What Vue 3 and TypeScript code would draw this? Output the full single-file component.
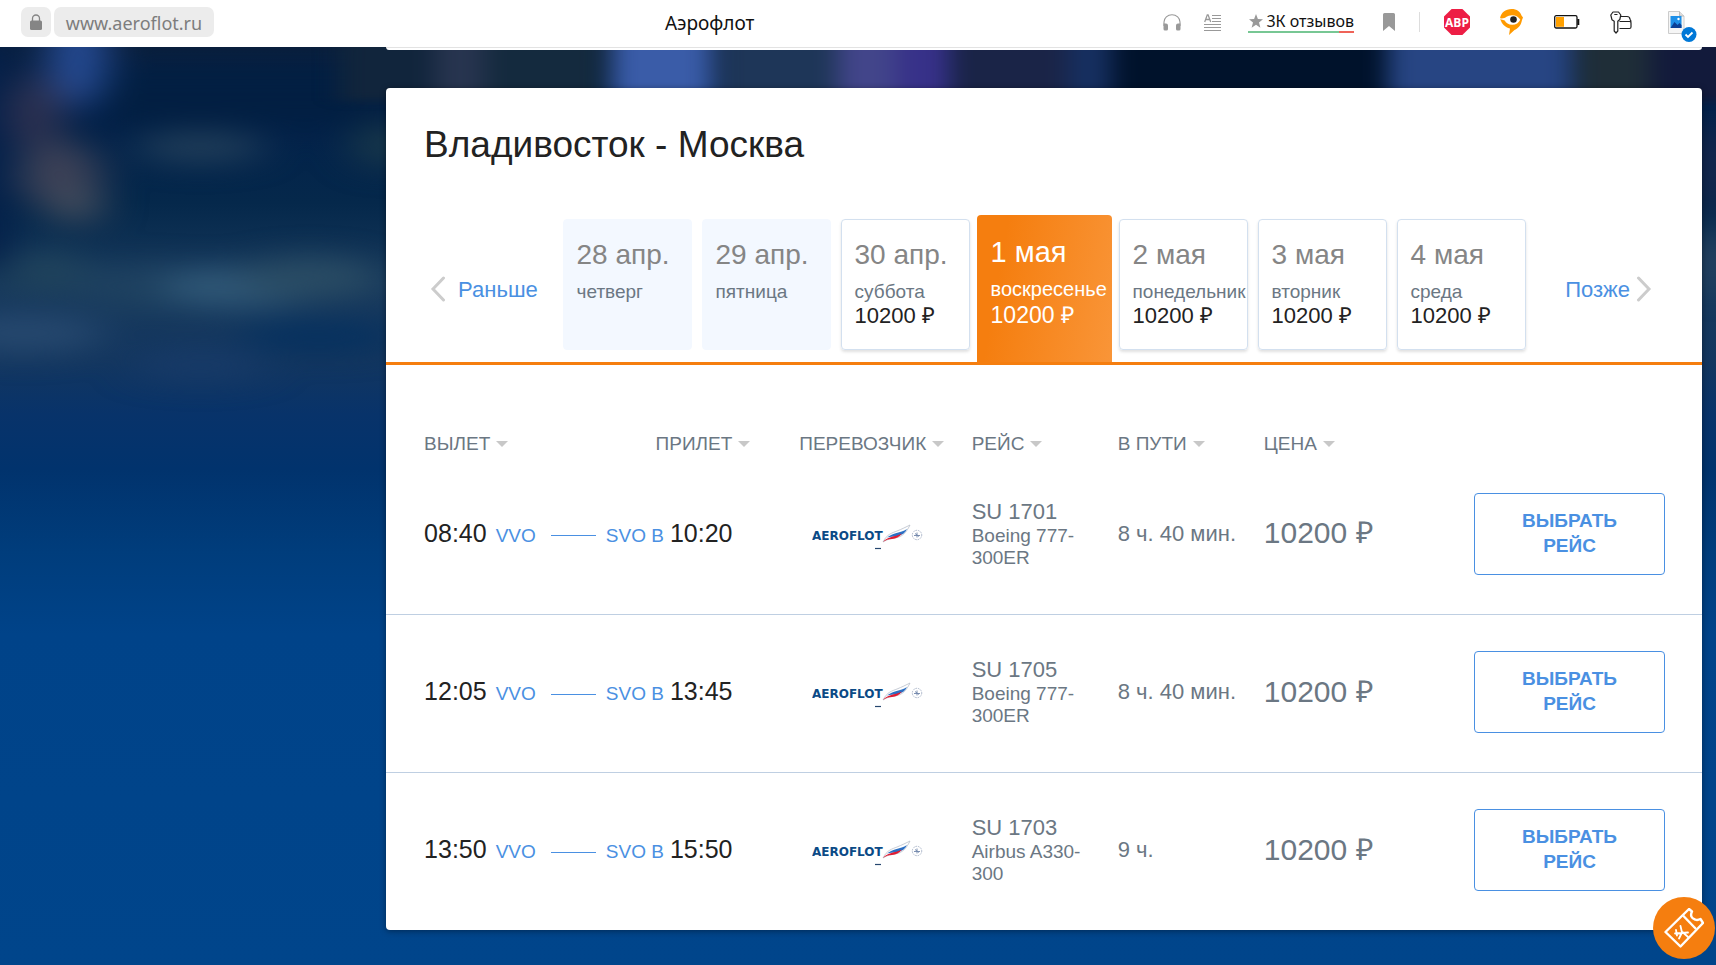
<script setup lang="ts">
import { ref } from 'vue'

interface Day {
  date: string
  weekday: string
  price?: string
}

interface Flight {
  departure: string
  from: string
  to: string
  arrival: string
  number: string
  aircraft: string
  duration: string
  price: string
}

const days: Day[] = [
  { date: '28 апр.', weekday: 'четверг' },
  { date: '29 апр.', weekday: 'пятница' },
  { date: '30 апр.', weekday: 'суббота', price: '10200' },
  { date: '1 мая', weekday: 'воскресенье', price: '10200' },
  { date: '2 мая', weekday: 'понедельник', price: '10200' },
  { date: '3 мая', weekday: 'вторник', price: '10200' },
  { date: '4 мая', weekday: 'среда', price: '10200' },
]
const selectedDay = ref(3)

const columns = [
  { key: 'departure', title: 'Вылет' },
  { key: 'arrival', title: 'Прилет' },
  { key: 'carrier', title: 'Перевозчик' },
  { key: 'flight', title: 'Рейс' },
  { key: 'duration', title: 'В пути' },
  { key: 'price', title: 'Цена' },
]

const flights: Flight[] = [
  { departure: '08:40', from: 'VVO', to: 'SVO B', arrival: '10:20', number: 'SU 1701', aircraft: 'Boeing 777-300ER', duration: '8 ч. 40 мин.', price: '10200' },
  { departure: '12:05', from: 'VVO', to: 'SVO B', arrival: '13:45', number: 'SU 1705', aircraft: 'Boeing 777-300ER', duration: '8 ч. 40 мин.', price: '10200' },
  { departure: '13:50', from: 'VVO', to: 'SVO B', arrival: '15:50', number: 'SU 1703', aircraft: 'Airbus A330-300', duration: '9 ч.', price: '10200' },
]
</script>

<template>
  <div class="window">
    <header class="toolbar">
      <div class="address">
        <button class="chip lock" type="button" aria-label="Защищённое соединение">
          <svg width="12" height="16" viewBox="0 0 12 16">
            <path d="M2.5 7V4.5a3.5 3.5 0 0 1 7 0V7" fill="none" stroke="#858585" stroke-width="1.3" />
            <rect y="6.500" width="12" height="9.500" rx="1.500" fill="#858585" />
          </svg>
        </button>
        <a class="chip url" href="#">www.aeroflot.ru</a>
      </div>
      <div class="page-title">Аэрофлот</div>
      <div class="tools">
        <button type="button" aria-label="Аудио" class="tool headphones">
          <svg width="18" height="17" viewBox="0 0 18 17">
            <path d="M1 12V8a8 7.300 0 0 1 16 0v4" fill="none" stroke="#999" stroke-width="1.100" />
            <path d="M0.500 9.500H3a2 2 0 0 1 2 2V15a1.500 1.500 0 0 1-1.500 1.500H2A1.500 1.500 0 0 1 .5 15zM17.500 9.500H15a2 2 0 0 0-2 2V15a1.500 1.500 0 0 0 1.500 1.500H16a1.500 1.500 0 0 0 1.500-1.500z" fill="#999" />
          </svg>
        </button>
        <button type="button" aria-label="Режим чтения" class="tool reader">
          <svg width="17" height="17" viewBox="0 0 17 17">
            <path d="M.7 8 3.300.8h.8L6.700 8M1.700 5.500h4" fill="none" stroke="#999" stroke-width="1.300" />
            <path d="M8 1.500h9M8 4.500h9M8 7.500h9M0 10.500h17M0 13.500h17M0 16.500h17" stroke="#999" />
          </svg>
        </button>
        <a class="reviews" href="#">
          <svg width="14" height="14" viewBox="0 0 14 14">
            <path d="m7 0 1.900 4.900 5.100.3-4 3.300 1.400 5.200L7 10.800l-4.400 2.900L4 8.500 0 5.200l5.100-.3z" fill="#999" />
          </svg>
          <span>3К отзывов</span>
        </a>
        <button type="button" aria-label="Закладка" class="tool bookmark">
          <svg width="12" height="18" viewBox="0 0 12 18">
            <path d="M1.500 0h9A1.500 1.500 0 0 1 12 1.500V18l-6-5-6 5V1.500A1.500 1.500 0 0 1 1.500 0z" fill="#999" />
          </svg>
        </button>
        <span class="separator"></span>
        <button type="button" aria-label="Блокировщик рекламы" class="tool blocker">
          <svg width="26" height="26" viewBox="0 0 26 26">
            <path d="M7.600 0h10.800L26 7.600v10.800L18.400 26H7.600L0 18.400V7.600z" fill="#ed1e45" />
            <text x="13" y="17.500" text-anchor="middle" font-family="Open Sans, sans-serif" font-weight="700" font-size="12" fill="#fff">ABP</text>
          </svg>
        </button>
        <button type="button" aria-label="Советник" class="tool eye">
          <svg width="23" height="26" viewBox="0 0 23 26">
            <path d="M0 9.500C1 3.500 5.500 0 11.500 0 17 0 20 2.500 21.500 6.500L23 8.500l-1 2.500C21 17 17.500 19.500 14.500 21L9 26l1-6.500C5 18 2 15.500 0 9.500z" fill="#ff9a00" />
            <path d="M0 9.300c6 .7 6.500-2.800 12-3 4.200 0 6.800 2 8.300 4.400-1.500 3-4.300 5-8 5-3.800 0-6.300-1.900-7.600-4.300C3 11.100 1.500 10.700 0 10.300z" fill="#fff" />
            <circle cx="13.500" cy="10.500" r="3.300" fill="#222" />
          </svg>
        </button>
        <button type="button" aria-label="Батарея" class="tool battery">
          <svg width="26" height="14" viewBox="0 0 26 14">
            <rect x=".7" y=".7" width="22.300" height="12.300" rx="1.500" fill="#fff" stroke="#111" stroke-width="1.300" />
            <rect x="2" y="2" width="8" height="9.800" fill="#ffa000" />
            <path d="M24.300 4v6" stroke="#111" stroke-width="2" />
          </svg>
        </button>
        <button type="button" aria-label="Пароли" class="tool keys">
          <svg width="22" height="23" viewBox="0 0 22 23" fill="none" stroke="#222" stroke-width="1.200" stroke-linejoin="round">
            <path d="M3 1h5.500l2.300 3-1 4.500-2 1.800V20L6 22l-1.800-2V10.300L2 8.800.8 4zM4.300 3.500h3.200" />
            <path d="M10.500 5.500h6.500a3 3 0 0 1 3 3M9.500 10.500h10a1.500 1.500 0 0 1 1.500 1.500v4a1.500 1.500 0 0 1-1.500 1.500H9.500M20 8.500q1 .8 1 3" />
          </svg>
        </button>
        <button type="button" aria-label="Скриншот" class="tool image">
          <svg width="30" height="32" viewBox="0 0 30 32">
            <path d="M.5.500h11L16 5v17.500H.5z" fill="#f5f5f5" stroke="#ccc" />
            <path d="M11.500.500V5H16" fill="#ddd" stroke="#bbb" />
            <rect x="2.500" y="5" width="11" height="12" fill="#1d8fe8" />
            <path d="m2.500 17 4-6 3 3 2-2 2 2v3z" fill="#0a3f96" />
            <circle cx="10.500" cy="8" r="1.200" fill="#fff" />
            <circle cx="21" cy="23.500" r="7.500" fill="#0078d7" />
            <path d="m17.500 23.500 2.500 2.500 4.500-4.500" fill="none" stroke="#fff" stroke-width="1.800" />
          </svg>
        </button>
      </div>
    </header>

    <div class="page">
      <svg class="backdrop" viewBox="0 0 1716 918" preserveAspectRatio="none" aria-hidden="true">
        <defs>
          <linearGradient id="night" x1="0" y1="0" x2="0" y2="1">
            <stop offset="0" stop-color="#0a1f3c" />
            <stop offset=".06" stop-color="#02204a" />
            <stop offset=".17" stop-color="#05284b" />
            <stop offset=".26" stop-color="#17395c" />
            <stop offset=".34" stop-color="#13365f" />
            <stop offset=".4" stop-color="#08336a" />
            <stop offset=".46" stop-color="#01336d" />
            <stop offset=".55" stop-color="#003d7c" />
            <stop offset=".64" stop-color="#004389" />
            <stop offset="1" stop-color="#00458b" />
          </linearGradient>
          <filter id="soft" x="-20%" y="-40%" width="140%" height="180%" color-interpolation-filters="sRGB">
            <feGaussianBlur stdDeviation="20 14" />
          </filter>
          <filter id="narrow" x="-10%" y="-60%" width="120%" height="220%" color-interpolation-filters="sRGB">
            <feGaussianBlur stdDeviation="12 4" />
          </filter>
        </defs>
        <rect width="1716" height="918" fill="url(#night)" />
        <g filter="url(#soft)">
          <rect x="-40" y="-10" width="50" height="230" fill="#04204a" />
          <rect x="100" y="20" width="300" height="60" fill="#021f42" />
          <ellipse cx="78" cy="8" rx="30" ry="52" fill="#254a92" />
          <ellipse cx="36" cy="66" rx="28" ry="40" fill="#2d3150" />
          <ellipse cx="60" cy="128" rx="42" ry="34" fill="#3b4056" />
          <ellipse cx="76" cy="158" rx="28" ry="18" fill="#424c5c" />
          <ellipse cx="46" cy="225" rx="46" ry="20" fill="#20435c" />
          <ellipse cx="24" cy="286" rx="82" ry="20" fill="#26486e" />
          <ellipse cx="200" cy="100" rx="66" ry="15" fill="#223f5a" />
          <ellipse cx="385" cy="98" rx="36" ry="22" fill="#18374a" />
          <ellipse cx="150" cy="240" rx="80" ry="22" fill="#1e4160" />
          <ellipse cx="240" cy="240" rx="80" ry="20" fill="#305877" />
          <ellipse cx="310" cy="230" rx="72" ry="20" fill="#2a4c64" />
          <ellipse cx="320" cy="290" rx="80" ry="14" fill="#04305f" />
          <ellipse cx="200" cy="318" rx="70" ry="14" fill="#183b69" />
          <ellipse cx="1712" cy="213" rx="18" ry="32" fill="#2b4663" />
          <ellipse cx="1712" cy="120" rx="20" ry="46" fill="#19264c" />
        </g>
        <g filter="url(#narrow)">
          <rect x="340" y="-30" width="95" height="84" fill="#11253c" />
          <rect x="435" y="-30" width="50" height="84" fill="#27344f" />
          <rect x="485" y="-30" width="120" height="84" fill="#142a3e" />
          <rect x="612" y="-30" width="100" height="84" fill="#3a5ca8" />
          <rect x="718" y="-30" width="120" height="84" fill="#1e3658" />
          <rect x="838" y="-30" width="66" height="84" fill="#42458a" />
          <rect x="896" y="-30" width="54" height="84" fill="#373189" />
          <rect x="952" y="-30" width="120" height="84" fill="#1a2447" />
          <rect x="1068" y="-30" width="44" height="84" fill="#162f60" />
          <rect x="1112" y="-30" width="274" height="84" fill="#00122b" />
          <rect x="1388" y="-30" width="184" height="84" fill="#274583" />
          <rect x="1576" y="-30" width="74" height="84" fill="#1f2e38" />
          <rect x="1650" y="-30" width="90" height="84" fill="#121a3b" />
        </g>
      </svg>

      <main class="results">
        <div class="previous-card"></div>
        <section class="card">
          <h1>Владивосток - Москва</h1>

          <div class="days">
            <button class="shift earlier" type="button">
              <svg width="16" height="26" viewBox="0 0 16 26"><path d="M13.500 2 3 13l10.500 11" fill="none" stroke="#ccc" stroke-width="3" stroke-linecap="round" /></svg>
              <span>Раньше</span>
            </button>
            <button
              v-for="(day, index) in days"
              :key="day.date"
              type="button"
              class="day"
              :class="{ empty: !day.price, active: index === selectedDay }"
              :disabled="!day.price"
              @click="selectedDay = index"
            >
              <span class="date">{{ day.date }}</span>
              <span class="weekday">{{ day.weekday }}</span>
              <span v-if="day.price" class="fare">{{ day.price }} ₽</span>
            </button>
            <button class="shift later" type="button">
              <span>Позже</span>
              <svg width="16" height="26" viewBox="0 0 16 26"><path d="M2.500 2 13 13 2.500 24" fill="none" stroke="#ccc" stroke-width="3" stroke-linecap="round" /></svg>
            </button>
          </div>

          <table>
            <thead>
              <tr>
                <th v-for="column in columns" :key="column.key" :class="column.key" scope="col">
                  <button type="button" class="sort">{{ column.title }}</button>
                </th>
                <td class="action"></td>
              </tr>
            </thead>
            <tbody>
              <tr v-for="flight in flights" :key="flight.number">
                <td class="departure">
                  <div class="leg">
                    <span class="time">{{ flight.departure }}</span>
                    <a class="airport" href="#">{{ flight.from }}</a>
                    <span class="path"></span>
                  </div>
                </td>
                <td class="arrival">
                  <div class="leg">
                    <a class="airport" href="#">{{ flight.to }}</a>
                    <span class="time">{{ flight.arrival }}</span>
                  </div>
                </td>
                <td class="carrier">
                  <svg class="logo" width="112" height="30" viewBox="0 0 112 30" role="img" aria-label="Aeroflot">
                    <text x="0" y="20" font-family="DejaVu Sans, sans-serif" font-weight="700" font-size="12" fill="#0b4a86">AEROFLOT</text>
                    <path d="M71 22c4-8 9-9 14-11 5-2 9-4 13-6-3 6-6 10-11 12-6 2-10 1-16 5z" fill="#fff" stroke="#b9bfca" stroke-width=".8" />
                    <path d="M75 17.500c6-5 13-4 20-8.500-2 4-5 6-9 7-5 1-8 .5-11 1.500z" fill="#2a6fc4" />
                    <path d="M71 22c5-6 11-4.500 19-8.500-3 4-6 5-10 5.500-4 .3-6 1-9 3z" fill="#e01b32" />
                    <circle cx="105" cy="15" r="4.700" fill="none" stroke="#a9b4c8" stroke-dasharray="1.500 1" />
                    <path d="M102 15.500h6M105 12.500v5M103 13.500l4 3" stroke="#7086aa" stroke-width=".9" />
                    <path d="M63 28.500h6" stroke="#26466e" stroke-width="1.200" />
                  </svg>
                </td>
                <td class="flight">
                  <div class="number">{{ flight.number }}</div>
                  <div class="aircraft">{{ flight.aircraft }}</div>
                </td>
                <td class="duration">{{ flight.duration }}</td>
                <td class="price">{{ flight.price }} ₽</td>
                <td class="action"><button type="button" class="choose">Выбрать рейс</button></td>
              </tr>
            </tbody>
          </table>
        </section>
      </main>
    </div>

    <button class="ticket" type="button" aria-label="Мои билеты">
      <svg width="40" height="40" viewBox="0 0 40 40" fill="none" stroke="#fff" stroke-width="2.400" stroke-linejoin="round">
        <path d="M1.500 24 25 1l3 2.500c-2 4-.5 7 3 8 2 .8 4 .3 5.500-.5L39 15 16.500 38.500z" />
        <path d="M19 7.500 32 21" />
        <path d="M11 25.500l13-1M16.500 18l1.500 6.500-3 6M19 24.500l5 4.500M12 22l1 5.500" stroke-width="1.800" stroke-linecap="round" />
      </svg>
    </button>
  </div>
</template>

<style>
html,
body {
  margin: 0;
  background: #00458b;
}
</style>

<style scoped>
.window {
  display: flex;
  flex-direction: column;
  min-height: 100vh;
  font-family: "Liberation Sans", Arial, sans-serif;
  color: #222;
}

button {
  padding: 0;
  border: 0;
  background: none;
  font: inherit;
  color: inherit;
  cursor: pointer;
}

a {
  color: inherit;
  text-decoration: none;
}

svg {
  display: block;
  flex: none;
}

.toolbar {
  display: flex;
  align-items: center;
  height: 47px;
  box-sizing: border-box;
  padding: 0 18px 3px 21px;
  background: #fff;
  font-family: "Noto Sans", sans-serif;
}

.address {
  display: flex;
  gap: 3px;
}

.chip {
  display: flex;
  align-items: center;
  justify-content: center;
  height: 30px;
  border-radius: 7px;
  background: #ececec;
}

.lock {
  width: 30px;
}

.url {
  width: 160px;
  box-sizing: border-box;
  padding-top: 2px;
  font-size: 18px;
  color: #7d7d7d;
}

.page-title {
  flex: 1;
  padding: 2px 0 0 42px;
  text-align: center;
  font-size: 19px;
  color: #111;
}

.tools {
  display: flex;
  align-items: center;
}

.headphones { margin-right: 23px; }
.reader { margin-right: 27px; }
.blocker { margin-right: 30px; }
.eye { margin-right: 31px; }
.battery { margin-right: 30px; }
.keys { margin-right: 36px; }
.image { height: 22px; }

.reviews {
  display: flex;
  align-items: center;
  gap: 3px;
  height: 20px;
  padding-left: 1px;
  margin-right: 29px;
  border-bottom: 2px solid;
  border-image: linear-gradient(90deg, #77c794 85%, #ef6358 85%) 1;
  font-size: 16px;
  line-height: 20px;
  color: #111;
}

.separator {
  width: 1px;
  height: 20px;
  margin: 0 24px;
  background: #ddd;
}

.page {
  position: relative;
  flex: 1;
  padding: 0 14px 35px 22.5%;
  background: #00458b;
}

.backdrop {
  position: absolute;
  inset: 0;
  width: 100%;
  height: 100%;
}

.results {
  position: relative;
}

.previous-card {
  height: 3px;
  box-sizing: border-box;
  margin-bottom: 38px;
  border-top: 1px solid #e3e3e3;
  border-radius: 0 0 4px 4px;
  background: #fff;
}

.card {
  border-radius: 4px;
  background: #fff;
  box-shadow: 0 1px 6px rgba(0, 0, 0, 0.4);
}

h1 {
  margin: 0;
  padding: 35px 38px 48px;
  font-size: 37px;
  line-height: 44px;
  font-weight: 400;
  color: #222;
}

.days {
  display: flex;
  align-items: flex-start;
  gap: 10px;
  border-bottom: 3px solid #f57e0f;
}

.shift {
  display: flex;
  flex: 1 1 140px;
  align-items: center;
  gap: 12px;
  height: 26px;
  margin-top: 61px;
  font-size: 22px;
  line-height: 26px;
  color: #4a90e2;
}

.shift span {
  padding-top: 2px;
}

.earlier {
  padding-left: 44px;
}

.later {
  justify-content: flex-end;
  gap: 6px;
  padding-right: 50px;
}

.day {
  display: flex;
  flex: 0 0 129px;
  flex-direction: column;
  box-sizing: border-box;
  height: 131px;
  margin-top: 4px;
  padding: 19px 0 0 13px;
  border: 1px solid #d3e0ef;
  border-radius: 4px;
  box-shadow: 0 2px 3px rgba(0, 0, 0, 0.12);
  text-align: left;
  white-space: nowrap;
}

.date {
  font-size: 28px;
  line-height: 32px;
  color: #858585;
}

.weekday {
  margin-top: 9px;
  font-size: 19px;
  line-height: 24px;
  color: #6b7783;
}

.fare {
  font-size: 22px;
  line-height: 24px;
  color: #222;
}

.empty {
  border-color: #f3f8ff;
  background: #f3f8ff;
  box-shadow: none;
}

.active {
  flex-basis: 135px;
  height: 147px;
  margin: 0 -3px;
  border: 0;
  border-radius: 4px 4px 0 0;
  padding: 21px 0 0 14px;
  background: linear-gradient(100deg, #f57e0f 20%, #f99538);
  box-shadow: none;
}

.active span {
  color: #fff;
}

.active .date {
  font-size: 29px;
}

.active .weekday {
  font-size: 20px;
}

.active .fare {
  font-size: 23px;
  line-height: 28px;
}

table {
  width: 100%;
  table-layout: fixed;
  border-collapse: collapse;
  color: #6b7783;
}

th,
td {
  box-sizing: border-box;
  padding: 0;
  text-align: left;
  font-weight: 400;
}

thead th {
  height: 91px;
  padding-top: 66px;
}

th.departure { width: 16.7%; }
th.arrival { width: 14.7%; padding-right: 49px; text-align: right; }
th.carrier { width: 13.1%; }
th.flight,
th.duration,
th.price { width: 11.1%; }

.sort {
  display: inline-flex;
  align-items: center;
  gap: 6px;
  font-size: 19px;
  line-height: 22px;
  text-transform: uppercase;
  white-space: nowrap;
}

.sort::after {
  content: "";
  border: 6px solid transparent;
  border-top-color: #c8c8c8;
  border-bottom: 0;
}

tbody tr + tr {
  border-top: 1px solid #bfcfe2;
}

tbody td {
  height: 158px;
  padding-bottom: 2px;
  vertical-align: middle;
}

th.departure,
td.departure {
  padding-left: 38px;
}

td.departure,
td.arrival {
  padding-bottom: 4px;
}

td.carrier {
  padding-bottom: 0;
}

.leg {
  display: flex;
  align-items: baseline;
  gap: 6px;
  white-space: nowrap;
}

.departure .leg {
  gap: 9px;
}

.time {
  font-size: 25px;
  line-height: 28px;
  color: #222;
}

.airport {
  font-size: 19px;
  color: #4a90e2;
}

.path {
  width: 45px;
  height: 1px;
  margin: 6px 0 0 6px;
  align-self: center;
  background: #4a90e2;
}

.logo {
  margin-left: 13px;
}

td.flight {
  padding-right: 30px;
}

.number {
  font-size: 22px;
  line-height: 26px;
}

.aircraft {
  font-size: 19px;
  line-height: 22px;
}

td.duration {
  font-size: 22px;
  white-space: nowrap;
}

td.price {
  padding-bottom: 6px;
  font-size: 30px;
  white-space: nowrap;
}

td.action {
  padding-right: 37px;
  text-align: right;
}

.choose {
  width: 191px;
  padding: 14px 40px 16px;
  border: 1px solid #4a90e2;
  border-radius: 4px;
  font-size: 19px;
  line-height: 25px;
  font-weight: 700;
  text-transform: uppercase;
  color: #4a90e2;
}

.ticket {
  position: fixed;
  right: 1px;
  bottom: 6px;
  display: flex;
  align-items: center;
  justify-content: center;
  width: 62px;
  height: 62px;
  border-radius: 50%;
  background: #f57e0f;
}
</style>
